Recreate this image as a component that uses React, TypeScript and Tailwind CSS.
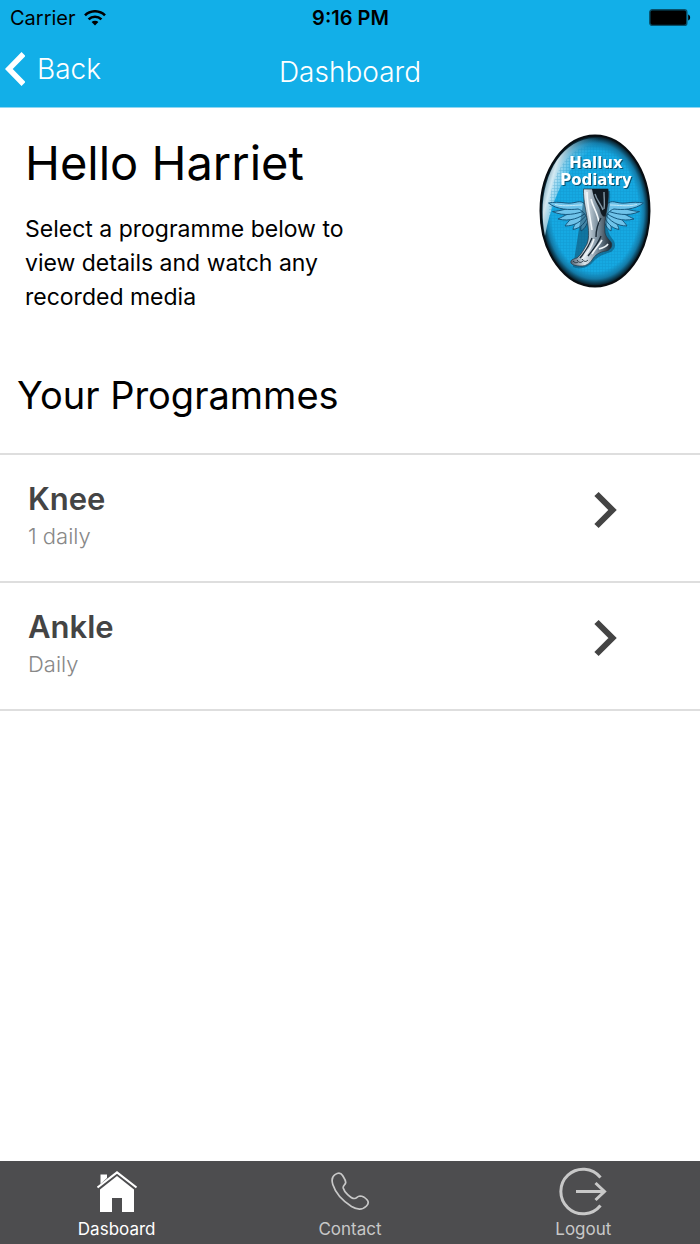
import type { ReactNode } from "react";

interface Programme {
  id: number;
  name: string;
  frequency: string;
}

const programmes: Programme[] = [
  { id: 1, name: "Knee", frequency: "1 daily" },
  { id: 2, name: "Ankle", frequency: "Daily" },
];

function StatusBar() {
  return (
    <div className="grid grid-cols-3 items-center h-9 pl-2.5 pr-[9px] text-black">
      <div className="flex items-center gap-2 text-xl">
        <span>Carrier</span>
        <svg width="22" height="16" viewBox="0 0 22 16" fill="none" stroke="currentColor" strokeWidth="2.6">
          <path d="M1 5.4a14.2 14.2 0 0 1 20 0" />
          <path d="M4.6 9.4a9 9 0 0 1 12.800 0" />
          <path d="M11 15.500l-3.400-3.400a4.800 4.800 0 0 1 6.800 0z" fill="currentColor" stroke="none" />
        </svg>
      </div>
      <span className="text-center text-xl font-semibold">9:16 PM</span>
      <svg className="justify-self-end" width="42" height="18" viewBox="0 0 42 18">
        <rect x="0.8" y="0.8" width="37" height="15.6" rx="2.5" stroke="#07506b" strokeWidth="1.4" />
        <path d="M39.2 5.6c2.6 1 2.6 5 0 6z" />
      </svg>
    </div>
  );
}

function Header() {
  return (
    <header className="bg-[#12afe8] border-b border-[#8fd6f2]">
      <StatusBar />
      <div className="grid grid-cols-3 items-center h-[71px] px-[5px] text-white">
        <button type="button" className="flex items-center gap-3 pb-1.5 text-[28px] leading-9 font-light">
          <svg width="20" height="34" viewBox="0 0 20 34" fill="none" stroke="currentColor" strokeWidth="5.5">
            <path d="M18.500 2L3.800 17L18.500 32" />
          </svg>
          Back
        </button>
        <h1 className="text-center text-[28px] leading-9 font-light">Dashboard</h1>
      </div>
    </header>
  );
}

function Wing() {
  return (
    <g fill="#6fc3ea" stroke="#15587f" strokeWidth="1">
      <path d="M50 84C48 90 47 94 42 97C41 92 43 87 47 80z" />
      <path d="M49 82C46 89 42 94 34 95.500C35 90 39 85 46 78z" />
      <path d="M48 80C43 87 36 92 26 92C29 87 35 82 45 76z" />
      <path d="M48 78C41 84 31 88 19 85C25 82 32 78 44 74z" />
      <path d="M48 76C38 80 25 83 13.500 77.500C22 77 30 74 42 71z" />
      <path d="M49 85C50 77 48 71 44 68.500C39 66 36 70 27 69C20 68 15 68 9.500 69C18 76 31 76 39 75C43 76 46 80 49 85z" />
      <path d="M16 70.500C26 73 35 71 43 71" stroke="#c4e9f8" fill="none" />
    </g>
  );
}

function Logo() {
  return (
    <svg width="112" height="154" viewBox="0 0 112 154" role="img" aria-label="Hallux Podiatry">
      <defs>
        <radialGradient id="rim">
          <stop offset="0.8" stopColor="#16a9e2" />
          <stop offset="0.9" stopColor="#1379a6" />
          <stop offset="1" stopColor="#060d12" />
        </radialGradient>
        <linearGradient id="shine" x1="0" y1="0.2" x2="0.6" y2="0.4">
          <stop offset="0" stopColor="#7fb9d2" stopOpacity="0.5" />
          <stop offset="0.3" stopColor="#e9f6fb" stopOpacity="0.9" />
          <stop offset="1" stopColor="#16a9e2" stopOpacity="0" />
        </linearGradient>
        <linearGradient id="steel" x1="0" x2="1">
          <stop offset="0" stopColor="#4d5f70" />
          <stop offset="0.35" stopColor="#dde7ee" />
          <stop offset="0.65" stopColor="#7c909f" />
          <stop offset="1" stopColor="#18232d" />
        </linearGradient>
        <pattern id="mesh" width="3" height="3" patternUnits="userSpaceOnUse">
          <path d="M0 .5h3M.5 0v3" stroke="#0b83ba" strokeWidth="0.6" opacity="0.35" />
        </pattern>
      </defs>
      <ellipse cx="56" cy="77" rx="54.5" ry="75.5" fill="url(#rim)" stroke="#070d12" strokeWidth="2" />
      <path d="M6 102C-4 52 18 5 56 4c10 0 18 3 25 9C48 3 17 42 6 102z" fill="url(#shine)" />
      <ellipse cx="56" cy="77" rx="46" ry="66" fill="url(#mesh)" />
      <Wing />
      <g transform="translate(114 0) scale(-1 1)">
        <Wing />
      </g>
      <path
        d="M46 57h25c1 14-2 22-3 32 0 8 3 13 7 18 2 5 1 8-3 11-6 2-13 4-18 10-5 6-14 8-20 5z"
        fill="#0a3853"
        opacity="0.45"
      />
      <path
        d="M44.500 55H69C70 63 68.500 70 67.500 77C66.500 84 65 90 66 99C67 104 71 106 72.500 109C73.500 113 71 116 67 117C60 118 56 121 53 126C50 130 47 132 42 132C37 132 33 131 32 129C31 126 34 125 38 124C43 120 45 115 48 110C50 105 50 99 49 91C48 79 44 67 44.500 55z"
        fill="url(#steel)"
        stroke="#26343f"
        strokeWidth="0.7"
      />
      <path d="M53 55H69C70 65 68 75 66.500 82C64 84 62 80 61 76C59 70 55 67 53 55z" fill="#111a22" />
      <path d="M56 60c2 7 6 10 8 16M65 58c0 8 1 11 0 17" stroke="#8297a5" strokeWidth="1.4" fill="none" />
      <path d="M48 58c0 12 3 24 5 38M52 65c2 9 7 14 8 24" stroke="#f2f7fa" strokeWidth="1.6" fill="none" />
      <path d="M62 84c-4 7-5 12-5 19M62 102c-3 8-8 14-13 20M53 104c-3 8-6 13-12 20" stroke="#1b2a36" strokeWidth="1.4" fill="none" />
      <path d="M55 105c-3 9-6 14-12 20M63 106c-3 5-7 9-10 14M69 110c-2 3-5 4-9 5" stroke="#edf3f6" strokeWidth="1.6" fill="none" />
      <path d="M34 127c2 2 3 2 5 1M38 126c2 3 4 3 6 1M43 125c2 3 4 3 6 1" stroke="#283742" strokeWidth="1" fill="none" />
      <g
        className="drop-shadow-[1px_1px_0_#07516f]"
        fill="#fff"
        textAnchor="middle"
        fontFamily="'DejaVu Sans', sans-serif"
        fontSize="15"
        fontWeight="700"
      >
        <text x="57" y="34">Hallux</text>
        <text x="57" y="51">Podiatry</text>
      </g>
    </svg>
  );
}

function ProgrammeRow({ programme }: { programme: Programme }) {
  return (
    <li className="border-b-2 border-[#dedede]">
      <button type="button" className="flex w-full items-start justify-between pt-6 pb-7 pl-7 pr-[83px] text-left">
        <span className="flex flex-col">
          <span className="text-[31px] leading-10 font-semibold text-[#444]">{programme.name}</span>
          <span className="text-[22px] leading-[34px] font-light text-[#888]">{programme.frequency}</span>
        </span>
        <svg className="mt-3" width="24" height="38" viewBox="0 0 24 38" fill="none" stroke="#444" strokeWidth="6">
          <path d="M3.500 3L19.500 19L3.500 35" />
        </svg>
      </button>
    </li>
  );
}

interface TabProps {
  label: string;
  active?: boolean;
  children: ReactNode;
}

function Tab({ label, active = false, children }: TabProps) {
  return (
    <a
      href="#"
      aria-current={active ? "page" : undefined}
      className={`flex flex-1 flex-col items-center pt-1.5 pb-0.5 ${active ? "text-white" : "text-[#c8c8c8]"}`}
    >
      {children}
      <span className="text-[17px] leading-[26px]">{label}</span>
    </a>
  );
}

function TabBar() {
  return (
    <nav className="flex bg-[#4d4d4f]">
      <Tab label="Dasboard" active>
        <svg width="42" height="49" viewBox="0 0 42 49" fill="currentColor">
          <path d="M4.500 17V7.500H11V11L4.500 17z" />
          <path d="M1.500 20.500L21 5.500L40.500 20.500" fill="none" stroke="currentColor" strokeWidth="2.200" />
          <path d="M4 22.500L21 9L38 22.500V45H26V31H16V45H4z" />
        </svg>
      </Tab>
      <Tab label="Contact">
        <svg width="40" height="49" viewBox="0 0 40 49" fill="none" stroke="currentColor" strokeWidth="1.7">
          <path d="M5 7.600C8 5.700 11 6 12.600 8.500C14 11 16 13.500 15.700 15.500C15.300 18 12.800 18.500 13.200 21C14 24.500 20.500 31.500 24.500 31.500C27 31.500 27 29.200 30 29C32.500 29 35.500 31 37.200 33C38.800 35 38.500 37 36.500 39C32 43.500 27 42.800 21.500 39.500C13 34 5.500 26 2.800 17.500C1.300 12.500 2 9.500 5 7.600z" />
        </svg>
      </Tab>
      <Tab label="Logout">
        <svg width="50" height="49" viewBox="0 0 50 49" fill="none" stroke="currentColor" strokeWidth="3">
          <path d="M42.500 10.500A22.300 22.300 0 1 0 42.500 38.500" />
          <path d="M18 24.500H46.500M37.500 16L46.500 24.500L37.500 33" />
        </svg>
      </Tab>
    </nav>
  );
}

export default function App() {
  return (
    <div className="flex min-h-screen flex-col bg-white font-['Inter',sans-serif] text-black">
      <Header />
      <main className="flex-1">
        <section className="flex items-start justify-between pt-[26px] pl-[25px] pr-[49px]">
          <div>
            <h2 className="text-[47px] leading-[58px]">Hello Harriet</h2>
            <p className="mt-5 max-w-[330px] text-[23px] leading-[34px]">
              Select a programme below to view details and watch any recorded media
            </p>
          </div>
          <Logo />
        </section>
        <h2 className="pt-14 pb-[33px] pl-[17px] text-[38px] leading-[50px]">Your Programmes</h2>
        <ul className="border-t-2 border-[#dedede]">
          {programmes.map((programme) => (
            <ProgrammeRow key={programme.id} programme={programme} />
          ))}
        </ul>
      </main>
      <TabBar />
    </div>
  );
}
